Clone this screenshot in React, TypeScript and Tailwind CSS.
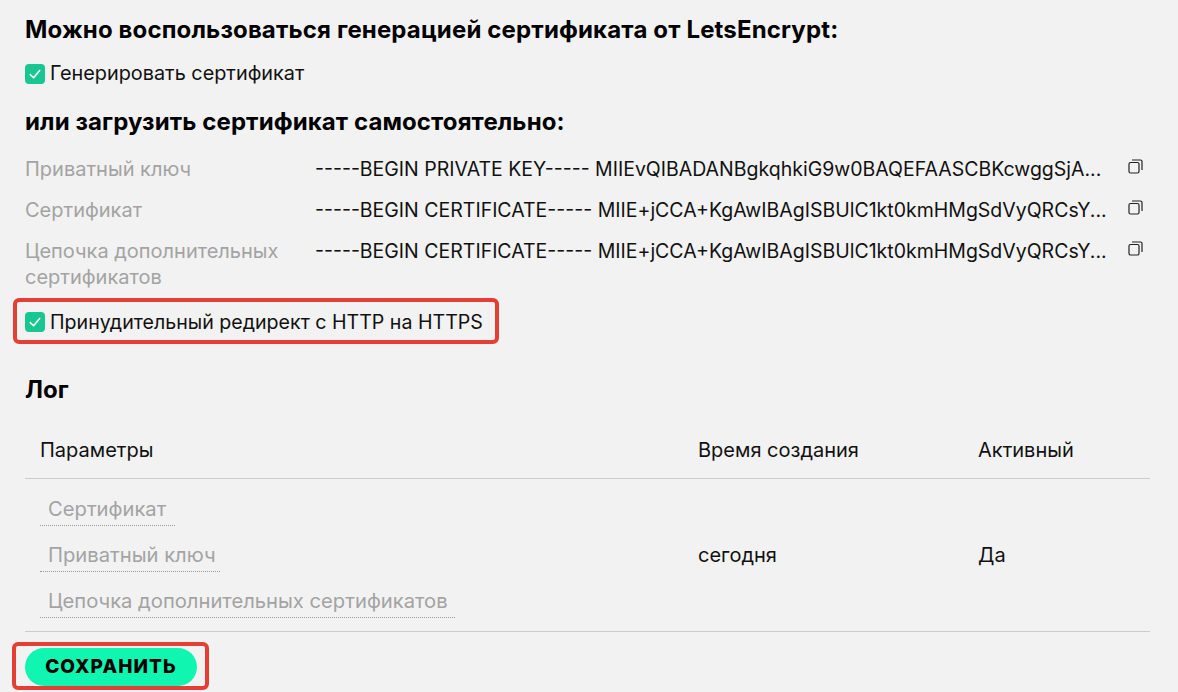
const font = { fontFamily: "Inter, 'Liberation Sans', sans-serif" };

function Check() {
  return (
    <span className="flex h-5 w-5 shrink-0 items-center justify-center rounded-[4px] bg-[#17c690]">
      <svg width="14" height="14" viewBox="0 0 12 12" fill="none">
        <path d="M2 6.5 L4.8 9.2 L10 3" stroke="#fff" strokeWidth="1.4" strokeLinecap="round" strokeLinejoin="round" />
      </svg>
    </span>
  );
}

function Copy() {
  return (
    <svg width="15" height="15" viewBox="0 0 15 15" fill="none" className="shrink-0">
      <rect x="1" y="3.5" width="10" height="10.5" rx="1.5" stroke="#222" strokeWidth="1.2" />
      <path d="M4 1 H12.5 A1.5 1.5 0 0 1 14 2.5 V11" stroke="#222" strokeWidth="1.2" />
    </svg>
  );
}

function Row({ label, value, h }: { label: string; value: string; h: string }) {
  return (
    <div className={`flex items-start ${h}`}>
      <div className="w-[290px] shrink-0 pr-6 text-[20px] leading-[26px] text-[#a3a3a3]">{label}</div>
      <div className="w-[800px] shrink-0 whitespace-nowrap text-[19.5px] leading-[26px] text-[#111]">{value}</div>
      <div className="ml-[13px] pt-[3px]"><Copy /></div>
    </div>
  );
}

function LogLink({ children, w }: { children: string; w: string }) {
  return (
    <div className={`${w} border-b border-dotted border-[#999] pl-2 pb-[1px] text-[20.2px] leading-[30px] text-[#a3a3a3]`}>{children}</div>
  );
}

export default function App() {
  const cert = "-----BEGIN CERTIFICATE----- MIIE+jCCA+KgAwIBAgISBUlC1kt0kmHMgSdVyQRCsY...";
  return (
    <div className="h-[692px] w-[1178px] overflow-hidden bg-[#f2f2f2] pl-[25px] text-[#111]" style={font}>
      <h2 className="pt-[16px] text-[24px] font-bold leading-[28px] tracking-[0.15px] text-black">Можно воспользоваться генерацией сертификата от LetsEncrypt:</h2>
      <div className="mt-[18px] flex h-6 items-center gap-[5px] text-[19.85px]"><Check />Генерировать сертификат</div>
      <h2 className="mt-[22px] text-[24px] font-bold leading-[28px] tracking-[0.1px] text-black">или загрузить сертификат самостоятельно:</h2>
      <div className="mt-[20px]">
        <Row h="h-[41px]" label="Приватный ключ" value="-----BEGIN PRIVATE KEY----- MIIEvQIBADANBgkqhkiG9w0BAQEFAASCBKcwggSjA..." />
        <Row h="h-[41px]" label="Сертификат" value={cert} />
        <Row h="h-[60px]" label="Цепочка дополнительных сертификатов" value={cert} />
      </div>
      <div className="-ml-[12px] flex h-[46px] w-[486px] items-center gap-[5px] rounded-[6px] border-4 border-[#e53f35] pl-[8px] pt-[1px] text-[19.6px]"><Check /><span className="pt-[2px]">Принудительный редирект с HTTP на HTTPS</span></div>
      <h2 className="mt-[32px] text-[24px] font-bold leading-[28px] text-black">Лог</h2>
      <div className="mt-[18px] w-[1125px]">
        <div className="flex h-[57px] items-center border-b border-[#ccc] text-[20px]">
          <div className="w-[673px] pl-[15px]">Параметры</div>
          <div className="w-[280px]">Время создания</div>
          <div>Активный</div>
        </div>
        <div className="flex h-[153px] items-center border-b border-[#ccc] text-[20px]">
          <div className="mt-[2px] flex w-[673px] flex-col gap-[14px] pl-[15px]">
            <LogLink w="w-[135px]">Сертификат</LogLink>
            <LogLink w="w-[180px]">Приватный ключ</LogLink>
            <LogLink w="w-[415px]">Цепочка дополнительных сертификатов</LogLink>
          </div>
          <div className="w-[280px]">сегодня</div>
          <div>Да</div>
        </div>
      </div>
      <div className="-ml-[13px] mt-[10px] h-[48px] w-[197px] rounded-[6px] border-4 border-[#e53f35] pl-[9px] pt-[2px]">
        <button className="h-[38px] w-[172px] rounded-full bg-[#10f5b0] text-[19px] font-extrabold tracking-[1.1px] text-black">СОХРАНИТЬ</button>
      </div>
    </div>
  );
}
